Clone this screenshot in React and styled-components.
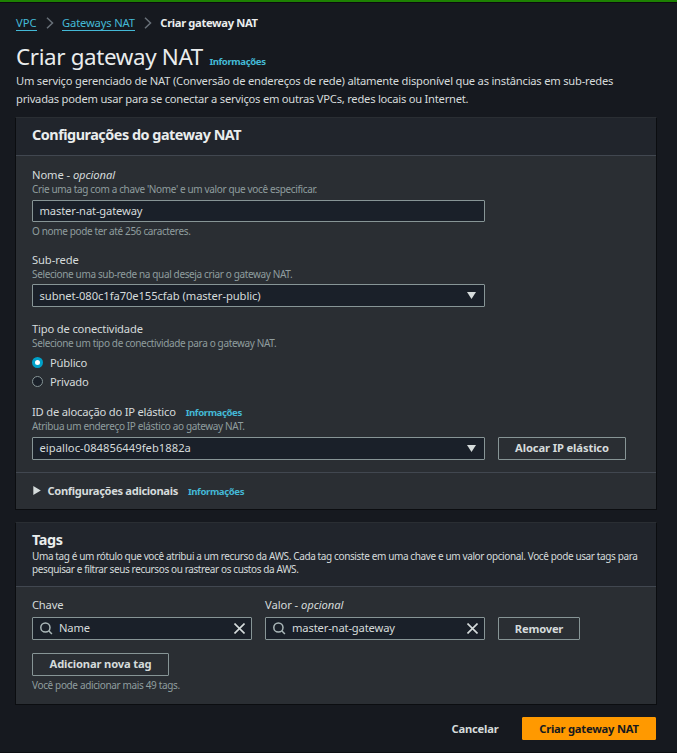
import React from 'react';
import styled, { createGlobalStyle } from 'styled-components';

const GlobalStyle = createGlobalStyle`
  * { box-sizing: border-box; }
  html, body { margin: 0; background: #16191f; }
  body {
    font-family: "Noto Sans", "Open Sans", sans-serif;
    font-size: 11.2px;
    color: #d5dbdb;
    white-space: nowrap;
  }
  button, input { font: inherit; letter-spacing: inherit; }
`;

const Page = styled.div`
  height: 753px;
  overflow: hidden;
  border-top: 2px solid #1d8102;
  border-bottom: 1px solid #0c0e12;
  background: #16191f;
  box-shadow: inset 0 1px 0 #0b0c10;
  padding: 10px 20px 0 16px;
`;

const Text = styled.span`
  letter-spacing: ${(p) => p.$track || 0}px;
`;

const Breadcrumbs = styled.nav`
  display: flex;
  align-items: center;
  height: 21px;
  color: #eaeded;
  svg { margin: 0 8.5px 0 9px; }
`;

const Crumb = styled.a`
  color: #44b9d6;
  line-height: 15px;
  border-bottom: 1px solid #44b9d6;
  letter-spacing: ${(p) => p.$track || 0}px;
`;

const Current = styled.b`
  padding-bottom: 1px;
  letter-spacing: ${(p) => p.$track || 0}px;
`;

const TitleRow = styled.div`
  display: flex;
  align-items: baseline;
  height: 31px;
  margin-top: 8px;
`;

const Title = styled.h1`
  margin: 0;
  font-size: 22.4px;
  line-height: 32px;
  font-weight: 400;
  letter-spacing: -0.36px;
  color: #eaeded;
`;

const Info = styled.a`
  margin-left: ${(p) => p.$gap}px;
  font-size: 9.6px;
  font-weight: 700;
  letter-spacing: -0.4px;
  color: #44b9d6;
`;

const Intro = styled.p`
  margin: 0;
  line-height: 18px;
  span { display: block; }
`;

const Card = styled.section`
  margin: ${(p) => p.$top}px 0 0 -1px;
  height: ${(p) => p.$height}px;
  border: 1px solid #0b0d10;
  border-top-color: #2a2e33;
  background: #2a2e33;
`;

const CardHeader = styled.header`
  height: ${(p) => p.$height}px;
  padding: 8px 16px 0;
  border-bottom: 1px solid #414750;
  background: #21252c;
`;

const Heading = styled.h2`
  margin: 0;
  font-size: 14.4px;
  line-height: 18px;
  font-weight: 700;
  letter-spacing: ${(p) => p.$track}px;
  color: #eaeded;
`;

const HeaderNote = styled.p`
  margin: 0;
  padding-top: 1px;
  font-size: 10px;
  line-height: 13px;
  span { display: block; }
`;

const Body = styled.div`
  padding: 11px 16px 0;
`;

const Label = styled.div`
  height: 16px;
  line-height: 16px;
`;

const Hint = styled.div`
  height: 14px;
  margin-top: ${(p) => p.$top || 0}px;
  line-height: 12px;
  font-size: 10px;
  color: #8f9d9e;
  letter-spacing: -0.36px;
`;

const Field = styled.div`
  margin-bottom: ${(p) => p.$gap}px;
`;

const ControlRow = styled.div`
  display: flex;
  gap: 13px;
  margin: ${(p) => p.$top}px 0 ${(p) => p.$bottom || 0}px;
`;

const Control = styled.div`
  display: flex;
  align-items: center;
  width: ${(p) => p.$width || 453}px;
  height: ${(p) => p.$height || 23}px;
  padding: 0 ${(p) => p.$end || 8}px 0 6.5px;
  border: 1px solid #879596;
  border-radius: 1px;
  background: #1a2029;
  svg:last-child { margin-left: auto; }
`;

const Value = styled.span`
  letter-spacing: ${(p) => p.$track || 0}px;
  margin-left: ${(p) => p.$indent || 0}px;
  padding-bottom: ${(p) => p.$lift || 1}px;
`;

const Button = styled.button`
  width: ${(p) => p.$width}px;
  height: 23px;
  padding: ${(p) => (p.$low ? '1px 0 0' : '0 0 1px')};
  border: 1px solid ${(p) => (p.$primary ? '#ff9900' : p.$plain ? 'transparent' : '#879596')};
  border-radius: 1px;
  background: ${(p) => (p.$primary ? '#ff9900' : 'transparent')};
  color: ${(p) => (p.$primary ? '#16191f' : '#d5dbdb')};
  font-weight: 700;
  line-height: 20px;
  letter-spacing: ${(p) => p.$track || 0}px;
`;

const RadioRow = styled.label`
  display: flex;
  align-items: center;
  gap: 7px;
  height: 19px;
  span:last-child { padding-bottom: 1px; }
`;

const Radio = styled.span`
  width: 11px;
  height: 11px;
  border-radius: 50%;
  border: ${(p) => (p.$on ? '3.5px solid #00a1c9' : '1px solid #879596')};
  background: ${(p) => (p.$on ? '#fff' : '#1a2029')};
`;

const Radios = styled.div`
  padding: 2px 0 1px;
`;

const Expander = styled.div`
  display: flex;
  align-items: center;
  height: 37px;
  padding: 0 17px 1px;
  border-top: 1px solid #414750;
  b { margin-left: 6.5px; letter-spacing: -0.36px; }
  a { padding-top: 1px; }
`;

const Columns = styled.div`
  display: grid;
  grid-template-columns: 220px 220px auto;
  column-gap: 13px;
  margin-top: -1px;
`;

const Footer = styled.footer`
  display: flex;
  justify-content: flex-end;
  margin: 12px 1px 0 0;
`;

const Chevron = () => (
  <svg width="8" height="12" viewBox="0 0 8 12" fill="none" stroke="#687078" strokeWidth="1.5">
    <path d="M1 .8 6.5 6 1 11.2" />
  </svg>
);

const Caret = () => (
  <svg width="9" height="8" viewBox="0 0 9 8" fill="#d5dbdb">
    <path d="M0 0h9L4.5 7z" />
  </svg>
);

const RightCaret = () => (
  <svg width="8" height="9" viewBox="0 0 8 9" fill="#d5dbdb">
    <path d="M.3 0v9L7.8 4.5z" />
  </svg>
);

const Search = () => (
  <svg width="13" height="13" viewBox="0 0 13 13" fill="none" stroke="#aab7b8" strokeWidth="1.5">
    <circle cx="5.4" cy="5.5" r="4.6" />
    <path d="m8.7 8.7 3.2 3.3" />
  </svg>
);

const Close = () => (
  <svg width="11" height="11" viewBox="0 0 11 11" stroke="#d5dbdb" strokeWidth="1.6">
    <path d="m.5.5 10 10M10.5.5l-10 10" />
  </svg>
);

export default function App() {
  return (
    <>
      <GlobalStyle />
      <Page>
        <Breadcrumbs>
          <Crumb>VPC</Crumb>
          <Chevron />
          <Crumb $track={-0.16}>Gateways NAT</Crumb>
          <Chevron />
          <Current $track={-0.35}>Criar gateway NAT</Current>
        </Breadcrumbs>
        <TitleRow>
          <Title>Criar gateway NAT</Title>
          <Info $gap={6.5}>Informações</Info>
        </TitleRow>
        <Intro>
          <Text $track={-0.225}>Um serviço gerenciado de NAT (Conversão de endereços de rede) altamente disponível que as instâncias em sub-redes</Text>
          <Text $track={-0.24}>privadas podem usar para se conectar a serviços em outras VPCs, redes locais ou Internet.</Text>
        </Intro>

        <Card $top={9} $height={393}>
          <CardHeader $height={38}>
            <Heading $track={-0.48}>Configurações do gateway NAT</Heading>
          </CardHeader>
          <Body>
            <Field $gap={13}>
              <Label><Text $track={-0.08}>Nome - <i>opcional</i></Text></Label>
              <Hint>Crie uma tag com a chave 'Nome' e um valor que você especificar.</Hint>
              <ControlRow $top={3} $bottom={3}>
                <Control $height={22}><Value $track={-0.15}>master-nat-gateway</Value></Control>
              </ControlRow>
              <Hint>O nome pode ter até 256 caracteres.</Hint>
            </Field>
            <Field $gap={14}>
              <Label><Text $track={-0.1}>Sub-rede</Text></Label>
              <Hint>Selecione uma sub-rede na qual deseja criar o gateway NAT.</Hint>
              <ControlRow $top={2}>
                <Control><Value $track={-0.07}>subnet-080c1fa70e155cfab (master-public)</Value><Caret /></Control>
              </ControlRow>
            </Field>
            <Field $gap={12}>
              <Label><Text $track={-0.17}>Tipo de conectividade</Text></Label>
              <Hint>Selecione um tipo de conectividade para o gateway NAT.</Hint>
              <Radios>
                <RadioRow><Radio $on /><Text $track={-0.2}>Público</Text></RadioRow>
                <RadioRow><Radio /><Text $track={-0.2}>Privado</Text></RadioRow>
              </Radios>
            </Field>
            <Field $gap={12}>
              <Label><Text $track={-0.21}>ID de alocação do IP elástico</Text><Info $gap={10}>Informações</Info></Label>
              <Hint>Atribua um endereço IP elástico ao gateway NAT.</Hint>
              <ControlRow $top={3}>
                <Control><Value $track={0.04} $lift={2}>eipalloc-084856449feb1882a</Value><Caret /></Control>
                <Button $width={128} $track={-0.12}>Alocar IP elástico</Button>
              </ControlRow>
            </Field>
          </Body>
          <Expander>
            <RightCaret />
            <b>Configurações adicionais</b>
            <Info $gap={10}>Informações</Info>
          </Expander>
        </Card>

        <Card $top={12} $height={183}>
          <CardHeader $height={64}>
            <Heading $track={-0.35}>Tags</Heading>
            <HeaderNote>
              <Text $track={-0.38}>Uma tag é um rótulo que você atribui a um recurso da AWS. Cada tag consiste em uma chave e um valor opcional. Você pode usar tags para</Text>
              <Text $track={-0.39}>pesquisar e filtrar seus recursos ou rastrear os custos da AWS.</Text>
            </HeaderNote>
          </CardHeader>
          <Body>
            <Columns>
              <Label><Text $track={-0.2}>Chave</Text></Label>
              <Label><Text $track={-0.06}>Valor - <i>opcional</i></Text></Label>
            </Columns>
            <ControlRow $top={4} $bottom={13}>
              <Control $width={220} $end={6.5}><Search /><Value $lift={2} $indent={6.5} $track={-0.2}>Name</Value><Close /></Control>
              <Control $width={220} $end={6.5}><Search /><Value $lift={2} $indent={6.5} $track={-0.15}>master-nat-gateway</Value><Close /></Control>
              <Button $low $width={82} $track={-0.2}>Remover</Button>
            </ControlRow>
            <Button $width={137} $track={-0.17}>Adicionar nova tag</Button>
            <Hint $top={3}>Você pode adicionar mais 49 tags.</Hint>
          </Body>
        </Card>

        <Footer>
          <Button $plain $low $width={94} $track={-0.2}>Cancelar</Button>
          <Button $primary $low $width={134} $track={-0.22}>Criar gateway NAT</Button>
        </Footer>
      </Page>
    </>
  );
}
